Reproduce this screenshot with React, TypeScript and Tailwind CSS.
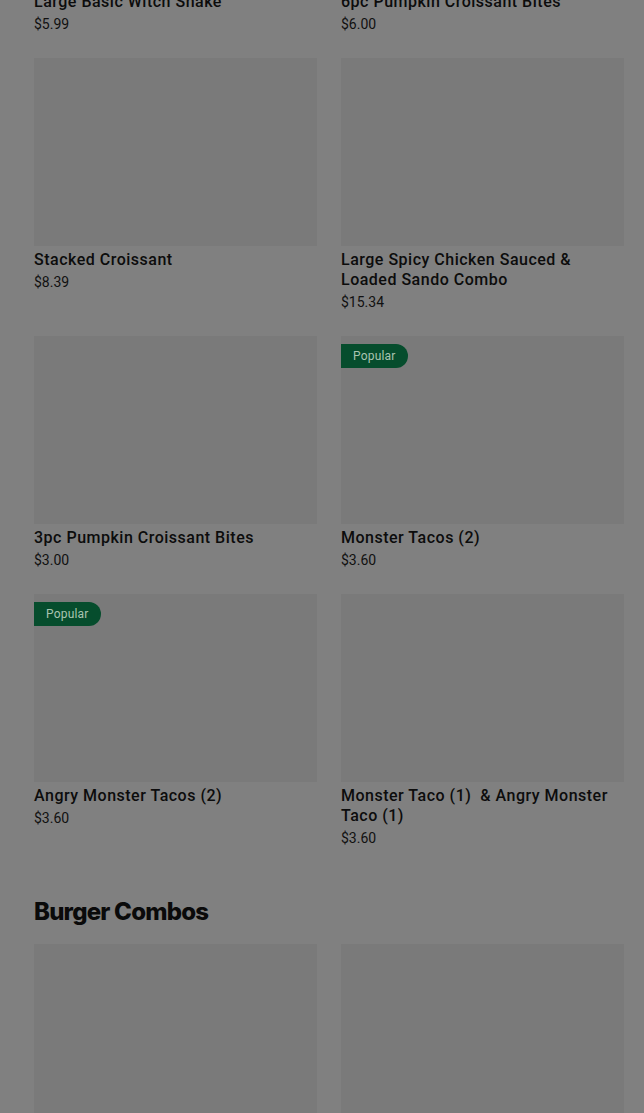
import React from 'react';

interface Item {
  name: string;
  price: string;
  popular?: boolean;
}

const rows: Item[][] = [
  [
    { name: 'Large Basic Witch Shake', price: '$5.99' },
    { name: '6pc Pumpkin Croissant Bites', price: '$6.00' },
  ],
  [
    { name: 'Stacked Croissant', price: '$8.39' },
    { name: 'Large Spicy Chicken Sauced & Loaded Sando Combo', price: '$15.34' },
  ],
  [
    { name: '3pc Pumpkin Croissant Bites', price: '$3.00' },
    { name: 'Monster Tacos (2)', price: '$3.60', popular: true },
  ],
  [
    { name: 'Angry Monster Tacos (2)', price: '$3.60', popular: true },
    { name: 'Monster Taco (1)  & Angry Monster Taco (1)', price: '$3.60' },
  ],
];

const burgers: Item[] = [
  { name: 'Burger Combo', price: '$9.99' },
  { name: 'Burger Combo', price: '$9.99' },
];

function Card({ item }: { item: Item }) {
  return (
    <div className="flex flex-col">
      <div className="relative h-[188px] bg-[#7a7a7a]">
        {item.popular && (
          <span className="absolute left-0 top-2 flex h-6 items-center rounded-r-full bg-[#064d2d] pl-3 pr-3 text-[12px] tracking-[0.2px] text-[#a9c4b0]">
            Popular
          </span>
        )}
      </div>
      <div className="mt-[4px] text-[16px] font-medium leading-5 tracking-[0.5px] text-[#0c0c0c] whitespace-pre-wrap">
        {item.name}
      </div>
      <div className="mt-[2px] text-[14px] leading-5 text-[#111]">{item.price}</div>
    </div>
  );
}

export default function App() {
  return (
    <div className="h-[1113px] overflow-hidden bg-[#808080]" style={{ fontFamily: 'Roboto, "Liberation Sans", sans-serif' }}>
      <div className="-mt-[200px] pl-[34px] pr-[20px]">
        <div className="grid grid-cols-2 gap-x-6 gap-y-6">
          {rows.flat().map((item, i) => (
            <Card key={i} item={item} />
          ))}
        </div>
        <h2
          className="mt-[48px] mb-4 text-[24px] font-extrabold leading-8 tracking-[-0.8px] text-[#0a0a0a]"
          style={{ fontFamily: 'Inter, "Liberation Sans", sans-serif' }}
        >
          Burger Combos
        </h2>
        <div className="grid grid-cols-2 gap-x-6 gap-y-6">
          {burgers.map((item, i) => (
            <Card key={i} item={item} />
          ))}
        </div>
      </div>
    </div>
  );
}
